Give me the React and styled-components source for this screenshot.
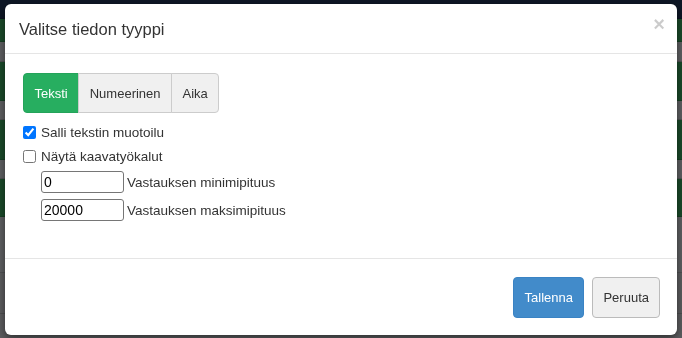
import React, { useState } from "react";
import styled, { createGlobalStyle } from "styled-components";

const GlobalStyle = createGlobalStyle`
  html, body {
    margin: 0;
    padding: 0;
    background: #0e1726;
    font-family: "Liberation Sans", Arial, sans-serif;
  }
`;

const rows = [
  { h: 18, c: "#0e1726" },
  { h: 22, c: "#1a4a2a" },
  { h: 19, c: "#5f6062" },
  { h: 38, c: "#1a4a2a" },
  { h: 18, c: "#5f6062" },
  { h: 39, c: "#1a4a2a" },
  { h: 18, c: "#5f6062" },
  { h: 37, c: "#1a4a2a" },
  { h: 55, c: "#5f6062" },
  { h: 40, c: "#5c5d5f" },
  { h: 40, c: "#5c5d5f" },
];

const Page = styled.div`
  display: flex;
  flex-direction: column;
  height: 338px;
  overflow: hidden;
`;

const PageRow = styled.div`
  height: ${(p) => p.$h}px;
  background: ${(p) => p.$c};
  border-bottom: 1px solid rgba(0, 0, 0, 0.15);
  flex-shrink: 0;
`;

const Backdrop = styled.div`
  position: fixed;
  inset: 0;
  padding: 4px 5px 3px 5px;
  display: flex;
  justify-content: center;
  align-items: flex-start;
`;

const Modal = styled.div`
  width: 672px;
  height: 331px;
  background: #fff;
  border-radius: 6px;
  box-shadow: 0 3px 9px rgba(0, 0, 0, 0.5);
  display: flex;
  flex-direction: column;
  color: #333;
`;

const Header = styled.div`
  height: 50px;
  box-sizing: border-box;
  padding: 0 12px 0 14px;
  border-bottom: 1px solid #e5e5e5;
  display: flex;
  align-items: center;
  justify-content: space-between;
`;

const Title = styled.h4`
  margin: 2px 0 0;
  font-size: 16.5px;
  font-weight: normal;
  color: #333;
`;

const Close = styled.button`
  border: none;
  background: none;
  padding: 0;
  margin: -10px 0 0;
  font-size: 20px;
  font-weight: bold;
  line-height: 1;
  color: #000;
  opacity: 0.2;
  cursor: pointer;
  font-family: "Liberation Sans", Arial, sans-serif;
`;

const Body = styled.div`
  flex: 1;
  padding: 19px 18px;
  border-bottom: 1px solid #e5e5e5;
  font-size: 13.5px;
`;

const Group = styled.div`
  display: inline-flex;
  margin-bottom: 7px;
`;

const TypeButton = styled.button`
  height: 40px;
  padding: 0 10.5px;
  font-size: 13px;
  font-family: "Liberation Sans", Arial, sans-serif;
  border: 1px solid ${(p) => (p.$active ? "#24a35a" : "#ccc")};
  background: ${(p) => (p.$active ? "#27ae60" : "#f0f0f0")};
  color: ${(p) => (p.$active ? "#fff" : "#333")};
  margin-left: -1px;
  cursor: pointer;

  &:first-child {
    margin-left: 0;
    border-radius: 4px 0 0 4px;
  }
  &:last-child {
    border-radius: 0 4px 4px 0;
  }
`;

const CheckRow = styled.label`
  display: flex;
  align-items: center;
  gap: 5px;
  height: 24px;

  input {
    margin: 0;
    width: 13px;
    height: 13px;
  }
`;

const FieldRow = styled.div`
  display: flex;
  align-items: center;
  gap: 3px;
  margin-left: 18px;
  height: 28px;
`;

const NumberInput = styled.input`
  width: 83px;
  height: 22px;
  box-sizing: border-box;
  border: 1px solid #767676;
  border-radius: 3px;
  padding: 0 2px;
  font-size: 14px;
  font-family: "Liberation Sans", Arial, sans-serif;
  color: #000;
`;

const Footer = styled.div`
  height: 76px;
  box-sizing: border-box;
  padding: 18px 17px 0;
  display: flex;
  justify-content: flex-end;
  gap: 8px;
`;

const FooterButton = styled.button`
  height: 41px;
  padding: 0 ${(p) => (p.$primary ? 10.5 : 10)}px;
  font-size: 13px;
  font-family: "Liberation Sans", Arial, sans-serif;
  border-radius: 4px;
  border: 1px solid ${(p) => (p.$primary ? "#3a83c4" : "#bbb")};
  background: ${(p) => (p.$primary ? "#428bca" : "#f0f0f0")};
  color: ${(p) => (p.$primary ? "#fff" : "#333")};
  cursor: pointer;
`;

const types = ["Teksti", "Numeerinen", "Aika"];

export default function App() {
  const [type, setType] = useState("Teksti");
  const [format, setFormat] = useState(true);
  const [formulas, setFormulas] = useState(false);
  const [min, setMin] = useState("0");
  const [max, setMax] = useState("20000");

  return (
    <>
      <GlobalStyle />
      <Page>
        {rows.map((r, i) => (
          <PageRow key={i} $h={r.h} $c={r.c} />
        ))}
      </Page>
      <Backdrop>
        <Modal>
          <Header>
            <Title>Valitse tiedon tyyppi</Title>
            <Close>×</Close>
          </Header>
          <Body>
            <Group>
              {types.map((t) => (
                <TypeButton key={t} $active={t === type} onClick={() => setType(t)}>
                  {t}
                </TypeButton>
              ))}
            </Group>
            <CheckRow>
              <input type="checkbox" checked={format} onChange={(e) => setFormat(e.target.checked)} />
              Salli tekstin muotoilu
            </CheckRow>
            <CheckRow>
              <input type="checkbox" checked={formulas} onChange={(e) => setFormulas(e.target.checked)} />
              Näytä kaavatyökalut
            </CheckRow>
            <FieldRow>
              <NumberInput value={min} onChange={(e) => setMin(e.target.value)} />
              Vastauksen minimipituus
            </FieldRow>
            <FieldRow>
              <NumberInput value={max} onChange={(e) => setMax(e.target.value)} />
              Vastauksen maksimipituus
            </FieldRow>
          </Body>
          <Footer>
            <FooterButton $primary>Tallenna</FooterButton>
            <FooterButton>Peruuta</FooterButton>
          </Footer>
        </Modal>
      </Backdrop>
    </>
  );
}
